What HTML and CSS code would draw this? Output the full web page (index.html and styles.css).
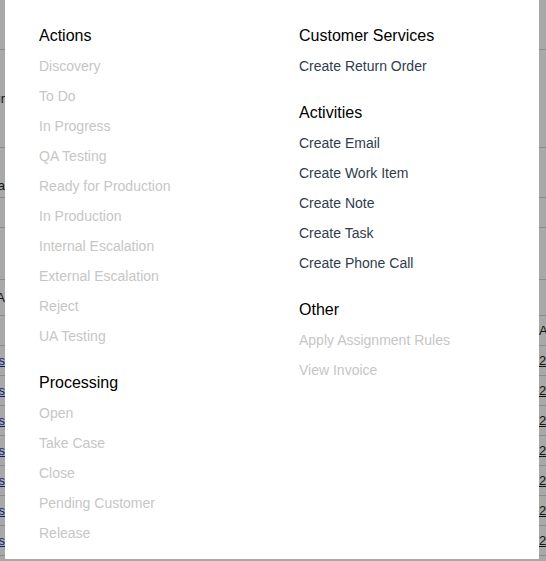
FILE: index.html
```html
<!DOCTYPE html>
<html lang="en">
<head>
<meta charset="utf-8">
<title>Menu</title>
<link rel="stylesheet" href="styles.css">
</head>
<body>
<div class="page">
  <div class="rows">
    <div class="row h50"><span class="l"></span><span class="r"></span></div>
    <div class="row h98 mid"><span class="l">Colour</span><span class="r"></span></div>
    <div class="row h50 low"><span class="l">Data</span><span class="r"></span></div>
    <div class="row h30"><span class="l"></span><span class="r"></span></div>
    <div class="row h52"><span class="l"></span><span class="r"></span></div>
    <div class="row h36"><span class="l">DATA</span><span class="r"></span></div>
    <div class="row h30"><span class="l"></span><span class="r">Ac</span></div>
    <div class="row h30"><a class="l link">Cases</a><span class="r date">24</span></div>
    <div class="row h30"><a class="l link">Cases</a><span class="r date">24</span></div>
    <div class="row h30"><a class="l link">Cases</a><span class="r date">24</span></div>
    <div class="row h30"><a class="l link">Cases</a><span class="r date">24</span></div>
    <div class="row h30"><a class="l link">Cases</a><span class="r date">24</span></div>
    <div class="row h30"><a class="l link">Cases</a><span class="r date">24</span></div>
    <div class="row h30"><a class="l link">Cases</a><span class="r date">24</span></div>
  </div>
  <div class="dim"></div>
  <div class="menu">
    <div class="col">
      <div class="group">
        <div class="heading">Actions</div>
        <div class="item off">Discovery</div>
        <div class="item off">To Do</div>
        <div class="item off">In Progress</div>
        <div class="item off">QA Testing</div>
        <div class="item off">Ready for Production</div>
        <div class="item off">In Production</div>
        <div class="item off">Internal Escalation</div>
        <div class="item off">External Escalation</div>
        <div class="item off">Reject</div>
        <div class="item off">UA Testing</div>
      </div>
      <div class="group">
        <div class="heading">Processing</div>
        <div class="item off">Open</div>
        <div class="item off">Take Case</div>
        <div class="item off">Close</div>
        <div class="item off">Pending Customer</div>
        <div class="item off">Release</div>
      </div>
    </div>
    <div class="col">
      <div class="group">
        <div class="heading">Customer Services</div>
        <div class="item on">Create Return Order</div>
      </div>
      <div class="group">
        <div class="heading">Activities</div>
        <div class="item on">Create Email</div>
        <div class="item on">Create Work Item</div>
        <div class="item on">Create Note</div>
        <div class="item on">Create Task</div>
        <div class="item on">Create Phone Call</div>
      </div>
      <div class="group">
        <div class="heading">Other</div>
        <div class="item off">Apply Assignment Rules</div>
        <div class="item off">View Invoice</div>
      </div>
    </div>
  </div>
</div>
</body>
</html>
```

FILE: styles.css
```css
* { box-sizing: border-box; }
html, body { margin: 0; padding: 0; }
body {
  width: 546px;
  height: 561px;
  overflow: hidden;
  font-family: "Liberation Sans", Arial, sans-serif;
  background: #fff;
}
.page {
  position: relative;
  width: 546px;
  height: 561px;
  overflow: hidden;
}
.rows {
  display: flex;
  flex-direction: column;
}
.row {
  display: flex;
  justify-content: space-between;
  align-items: center;
  border-bottom: 1px solid #d4d4d4;
  font-size: 13px;
  color: #222;
}
.row.low { align-items: flex-end; padding-bottom: 4px; }
.h50 { height: 50px; }
.h98 { height: 98px; }
.h30 { height: 30px; }
.h52 { height: 52px; }
.h36 { height: 36px; }
.l {
  width: 5px;
  display: flex;
  justify-content: flex-end;
  overflow: hidden;
  white-space: nowrap;
}
.r {
  width: 7px;
  overflow: hidden;
  white-space: nowrap;
}
.link { color: #1a2fb0; text-decoration: underline; }
.date { text-decoration: underline; }
.dim {
  position: absolute;
  inset: 0;
  background: rgba(0, 0, 0, 0.34);
}
.menu {
  position: absolute;
  left: 5px;
  top: 0;
  width: 534px;
  height: 559px;
  background: #fff;
  display: flex;
  padding: 25px 0 0 34px;
}
.col {
  width: 260px;
  flex: 0 0 260px;
  display: flex;
  flex-direction: column;
  gap: 21px;
}
.heading {
  font-size: 16px;
  line-height: 22px;
  height: 20px;
  color: #000;
  margin-bottom: 6px;
}
.item {
  font-size: 14px;
  line-height: 30px;
  height: 30px;
  white-space: nowrap;
}
.item.off { color: #c6c6c6; }
.item.on { color: #2f3d4f; }
```
